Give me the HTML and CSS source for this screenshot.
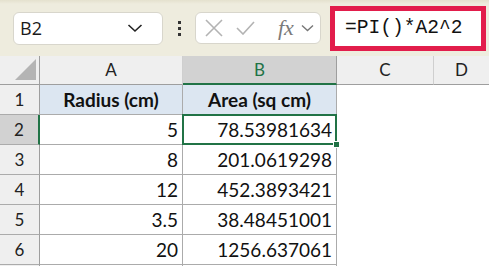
FILE: index.html
```html
<!DOCTYPE html>
<html lang="en">
<head>
    <meta charset="UTF-8">
    <title>PI formula</title>
    <link rel="stylesheet" href="styles.css">
</head>
<body>
    <!-- Formula bar -->
    <div class="toolbar">
        <div class="name-box">
            <span>B2</span>
            <svg class="chev" width="16" height="10" viewBox="0 0 16 10"><path d="M1.5 2 L8 8 L14.5 2" fill="none" stroke="#222" stroke-width="1.6"/></svg>
        </div>
        <div class="dots"><i></i><i></i><i></i></div>
        <div class="fx-box">
            <svg width="18" height="18" viewBox="0 0 18 18"><path d="M1 1 L17 17 M17 1 L1 17" stroke="#b3b3b3" stroke-width="1.6" fill="none"/></svg>
            <svg width="19" height="14" viewBox="0 0 19 14"><path d="M1 7 L7 13 L18 1" stroke="#b3b3b3" stroke-width="1.6" fill="none"/></svg>
            <span class="fx">fx</span>
            <svg width="13" height="8" viewBox="0 0 13 8"><path d="M1 1.5 L6.5 6.5 L12 1.5" stroke="#777" stroke-width="1.4" fill="none"/></svg>
        </div>
        <div class="formula">=PI()*A2^2</div>
    </div>

    <!-- Sheet -->
    <div class="sheet">
        <div class="corner"><span class="tri"></span></div>
        <div class="col-head">A</div>
        <div class="col-head active">B</div>
        <div class="col-head">C</div>
        <div class="col-head last">D</div>

        <div class="row-head">1</div>
        <div class="cell title">Radius (cm)</div>
        <div class="cell title">Area (sq cm)</div>
        <div class="blank"></div>
        <div class="blank"></div>

        <div class="row-head active">2</div>
        <div class="cell num">5</div>
        <div class="cell num selected">78.53981634<span class="handle"></span></div>
        <div class="blank"></div>
        <div class="blank"></div>

        <div class="row-head">3</div>
        <div class="cell num">8</div>
        <div class="cell num">201.0619298</div>
        <div class="blank"></div>
        <div class="blank"></div>

        <div class="row-head">4</div>
        <div class="cell num">12</div>
        <div class="cell num">452.3893421</div>
        <div class="blank"></div>
        <div class="blank"></div>

        <div class="row-head">5</div>
        <div class="cell num">3.5</div>
        <div class="cell num">38.48451001</div>
        <div class="blank"></div>
        <div class="blank"></div>

        <div class="row-head">6</div>
        <div class="cell num">20</div>
        <div class="cell num">1256.637061</div>
        <div class="blank"></div>
        <div class="blank"></div>

        <!-- top edge of row 7 -->
        <div class="row-head stub"></div>
        <div class="cell stub"></div>
        <div class="cell stub"></div>
        <div class="blank"></div>
        <div class="blank"></div>
    </div>
</body>
</html>
```

FILE: styles.css
```css
* {
    margin: 0;
    padding: 0;
    box-sizing: border-box;
}

body {
    width: 489px;
    height: 266px;
    overflow: hidden;
    background: #ffffff;
    font-family: Lato, 'Open Sans', sans-serif;
}

/* Formula bar */
.toolbar {
    height: 56px;
    display: flex;
    align-items: center;
    padding-left: 13px;
    background: linear-gradient(#e4e1ce 0, #eeecde 4px);
}

.name-box {
    width: 150px;
    height: 33px;
    background: #fff;
    border: 1px solid #d8d6cc;
    border-radius: 6px;
    display: flex;
    align-items: center;
    justify-content: space-between;
    padding: 0 19px 0 6px;
    font-family: 'Open Sans', sans-serif;
    font-size: 18px;
    color: #1a1a1a;
}

.dots {
    width: 32px;
    display: flex;
    flex-direction: column;
    align-items: center;
    gap: 3px;
}

.dots i {
    width: 3px;
    height: 3px;
    background: #333;
}

.fx-box {
    width: 126px;
    height: 32px;
    background: #fff;
    border: 1px solid #d8d6cc;
    border-radius: 6px;
    display: flex;
    align-items: center;
    padding-left: 9px;
    gap: 13px;
}

.fx-box .fx {
    font-family: 'Liberation Serif', serif;
    font-style: italic;
    font-size: 22px;
    color: #7a7a7a;
    margin-left: 10px;
    margin-right: -6px;
}

.formula {
    margin-left: 9px;
    width: 156px;
    height: 45px;
    background: #fff;
    border: 5px solid #e21d4b;
    font-family: 'Liberation Mono', monospace;
    font-size: 19.6px;
    color: #111;
    padding-left: 10px;
    line-height: 35px;
}

/* Sheet grid */
.sheet {
    display: grid;
    grid-template-columns: 40px 143px 154px 97px 55px;
    grid-template-rows: 29px repeat(6, 30px) 2px;
    font-size: 19px;
    color: #111;
}

.corner {
    background: #efefef;
    border-right: 1px solid #9e9e9e;
    border-bottom: 1px solid #9e9e9e;
    position: relative;
}

.corner .tri {
    position: absolute;
    right: 3px;
    bottom: 4px;
    width: 0;
    height: 0;
    border-left: 21px solid transparent;
    border-bottom: 21px solid #b4b4b4;
}

.col-head {
    background: #efefef;
    border-right: 1px solid #cfcfcf;
    border-bottom: 1px solid #9e9e9e;
    text-align: center;
    font-size: 17px;
    line-height: 28px;
    color: #222;
}

.col-head.active {
    background: #d2d2d2;
    color: #217346;
    border-right-color: #9e9e9e;
    border-bottom: 2px solid #217346;
    line-height: 27px;
}

.col-head.last {
    border-right: none;
}

.row-head {
    background: #efefef;
    border-right: 1px solid #9e9e9e;
    border-bottom: 1px solid #ababab;
    text-align: center;
    font-size: 17px;
    line-height: 29px;
    color: #222;
}

.row-head.active {
    background: #d2d2d2;
    border-right: 2px solid #217346;
}

.cell {
    border-right: 1px solid #ababab;
    border-bottom: 1px solid #ababab;
    line-height: 30px;
    white-space: nowrap;
}

.stub {
    border-bottom: none;
}

.cell.title {
    background: #dce6f1;
    font-weight: bold;
    text-align: center;
}

.cell.num {
    text-align: right;
    padding-right: 4px;
}

.cell.selected {
    position: relative;
}

.cell.selected::after {
    content: '';
    position: absolute;
    left: -1px;
    top: -1px;
    right: -1px;
    bottom: -1px;
    border: 2px solid #217346;
}

.handle {
    position: absolute;
    right: -4px;
    bottom: -4px;
    width: 7px;
    height: 7px;
    background: #217346;
    border: 1px solid #fff;
    z-index: 2;
}

.blank {
    background: #fff;
}
```
